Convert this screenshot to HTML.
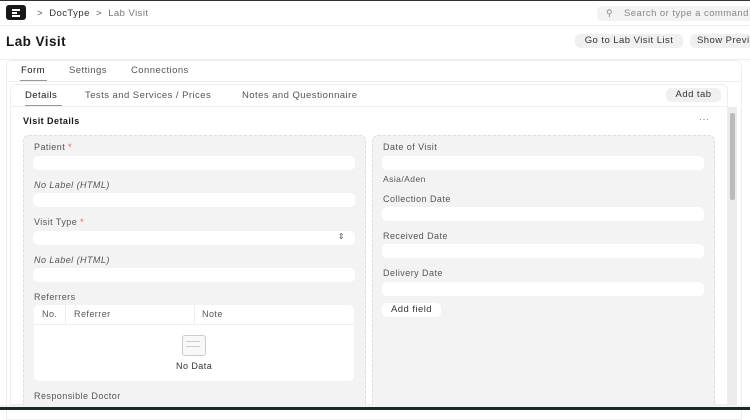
<!DOCTYPE html>
<html><head><meta charset="utf-8"><style>
*{box-sizing:border-box;margin:0;padding:0}
body{width:750px;height:410px;overflow:hidden;background:#fff;font-family:"Liberation Sans",sans-serif;color:#333;position:relative;letter-spacing:0.45px}
.a{position:absolute}
.lbl{position:absolute;font-size:9px;color:#555}
.inp{position:absolute;background:#fff;border-radius:5px;height:14px}
.btn{position:absolute;background:#f0f0f0;border-radius:5px;font-size:9.5px;color:#333;text-align:center;line-height:14px}
.req{color:#e06666}
.it{font-style:italic}
</style></head><body>
<div class="a" style="left:0;top:0;width:750px;height:1px;background:#333"></div>
<div class="a" style="left:6px;top:5px;width:20px;height:15px;background:#171717;border-radius:3px"></div>
<div class="a" style="left:12px;top:9px;width:8px;height:2px;background:#fff"></div>
<div class="a" style="left:12px;top:12px;width:5px;height:1.5px;background:#fff"></div>
<div class="a" style="left:12px;top:15px;width:8px;height:2px;background:#fff"></div>
<div class="a" style="left:37px;top:8px;font-size:9.5px;color:#555">&gt;&nbsp; <span style="color:#333">DocType</span> &nbsp;&gt;&nbsp; <span style="color:#777">Lab Visit</span></div>
<div class="a" style="left:597px;top:6px;width:160px;height:15px;background:#f3f3f3;border-radius:5px"></div>
<div class="a" style="left:606px;top:8px;font-size:9px;color:#888">&#9906;</div>
<div class="a" style="left:624px;top:8px;font-size:9.5px;color:#888;white-space:nowrap">Search or type a command</div>
<div class="a" style="left:0;top:25px;width:750px;height:1px;background:#eee"></div>
<div class="a" style="left:6px;top:34px;font-size:13.5px;font-weight:bold;color:#171717">Lab Visit</div>
<div class="btn" style="left:575px;top:34px;width:108px">Go to Lab Visit List</div>
<div class="btn" style="left:690px;top:34px;width:80px;text-align:left;padding-left:7px;white-space:nowrap">Show Preview</div>
<div class="a" style="left:0;top:59px;width:750px;height:1px;background:#eee"></div>
<div class="a" style="left:6px;top:60px;width:736px;height:360px;border:1px solid #eee;border-radius:6px 6px 0 0"></div>
<div class="a" style="left:21px;top:65px;font-size:9.5px;color:#171717">Form</div>
<div class="a" style="left:20px;top:80px;width:27px;height:1px;background:#999"></div>
<div class="a" style="left:69px;top:65px;font-size:9.5px;color:#555">Settings</div>
<div class="a" style="left:131px;top:65px;font-size:9.5px;color:#555">Connections</div>
<div class="a" style="left:7px;top:81px;width:734px;height:1px;background:#eee"></div>
<div class="a" style="left:10px;top:84px;width:718px;height:321px;border:1px solid #eee;border-radius:6px 6px 0 0;background:#fff;overflow:hidden"></div>
<div class="a" style="left:25px;top:90px;font-size:9.5px;color:#171717">Details</div>
<div class="a" style="left:25px;top:105px;width:37px;height:1px;background:#999"></div>
<div class="a" style="left:85px;top:90px;font-size:9.5px;color:#555">Tests and Services / Prices</div>
<div class="a" style="left:242px;top:90px;font-size:9.5px;color:#555">Notes and Questionnaire</div>
<div class="btn" style="left:666px;top:88px;width:55px">Add tab</div>
<div class="a" style="left:11px;top:106px;width:716px;height:1px;background:#eee"></div>
<div class="a" style="left:728px;top:107px;width:9px;height:298px;background:#ececec"></div>
<div class="a" style="left:730px;top:113px;width:5px;height:87px;background:#bbb;border-radius:2px"></div>
<div class="a" style="left:23px;top:116px;font-size:9px;font-weight:bold;color:#171717">Visit Details</div>
<div class="a" style="left:699px;top:114px;font-size:9px;color:#777">···</div>
<div class="a" style="left:23px;top:135px;width:343px;height:270px;background:#f3f3f3;border:1px dashed #ddd;border-bottom:none;border-radius:6px 6px 0 0"></div>
<div class="a" style="left:372px;top:135px;width:343px;height:270px;background:#f3f3f3;border:1px dashed #ddd;border-bottom:none;border-radius:6px 6px 0 0"></div>
<div class="lbl" style="left:34px;top:142px">Patient <span class="req">*</span></div>
<div class="inp" style="left:33px;top:156px;width:322px"></div>
<div class="lbl it" style="left:34px;top:180px">No Label (HTML)</div>
<div class="inp" style="left:33px;top:193px;width:322px"></div>
<div class="lbl" style="left:34px;top:217px">Visit Type <span class="req">*</span></div>
<div class="inp" style="left:33px;top:231px;width:322px"><span style="position:absolute;right:10px;top:1px;font-size:8px;color:#555">&#8661;</span></div>
<div class="lbl it" style="left:34px;top:255px">No Label (HTML)</div>
<div class="inp" style="left:33px;top:268px;width:322px"></div>
<div class="lbl" style="left:34px;top:292px">Referrers</div>
<div class="a" style="left:34px;top:305px;width:320px;height:76px;background:#fff;border-radius:5px"></div>
<div class="a" style="left:34px;top:324px;width:320px;height:1px;background:#eee"></div>
<div class="a" style="left:65px;top:305px;width:1px;height:19px;background:#eee"></div>
<div class="a" style="left:194px;top:305px;width:1px;height:19px;background:#eee"></div>
<div class="a" style="left:42px;top:309px;font-size:9px;color:#555">No.</div>
<div class="a" style="left:74px;top:309px;font-size:9px;color:#555">Referrer</div>
<div class="a" style="left:202px;top:309px;font-size:9px;color:#555">Note</div>
<div class="a" style="left:182px;top:335px;width:24px;height:21px;border:1px solid #ccc;border-radius:3px;background:#f8f8f8"></div>
<div class="a" style="left:186px;top:341px;width:14px;height:1px;border-top:1px solid #ccc"></div>
<div class="a" style="left:186px;top:346px;width:14px;height:1px;border-top:1px solid #ccc"></div>
<div class="a" style="left:176px;top:361px;font-size:9px;color:#333">No Data</div>
<div class="lbl" style="left:34px;top:391px">Responsible Doctor</div>
<div class="lbl" style="left:383px;top:142px">Date of Visit</div>
<div class="inp" style="left:382px;top:156px;width:322px"></div>
<div class="lbl" style="left:383px;top:174px;font-size:8.5px">Asia/Aden</div>
<div class="lbl" style="left:383px;top:194px">Collection Date</div>
<div class="inp" style="left:382px;top:207px;width:322px"></div>
<div class="lbl" style="left:383px;top:231px">Received Date</div>
<div class="inp" style="left:382px;top:244px;width:322px"></div>
<div class="lbl" style="left:383px;top:268px">Delivery Date</div>
<div class="inp" style="left:382px;top:282px;width:322px"></div>
<div class="btn" style="left:382px;top:303px;width:59px;background:#fff">Add field</div>
<div class="a" style="left:0;top:405px;width:750px;height:2px;background:#f3f3f3"></div>
<div class="a" style="left:0;top:407px;width:750px;height:3px;background:#1f2828"></div>
</body></html>
